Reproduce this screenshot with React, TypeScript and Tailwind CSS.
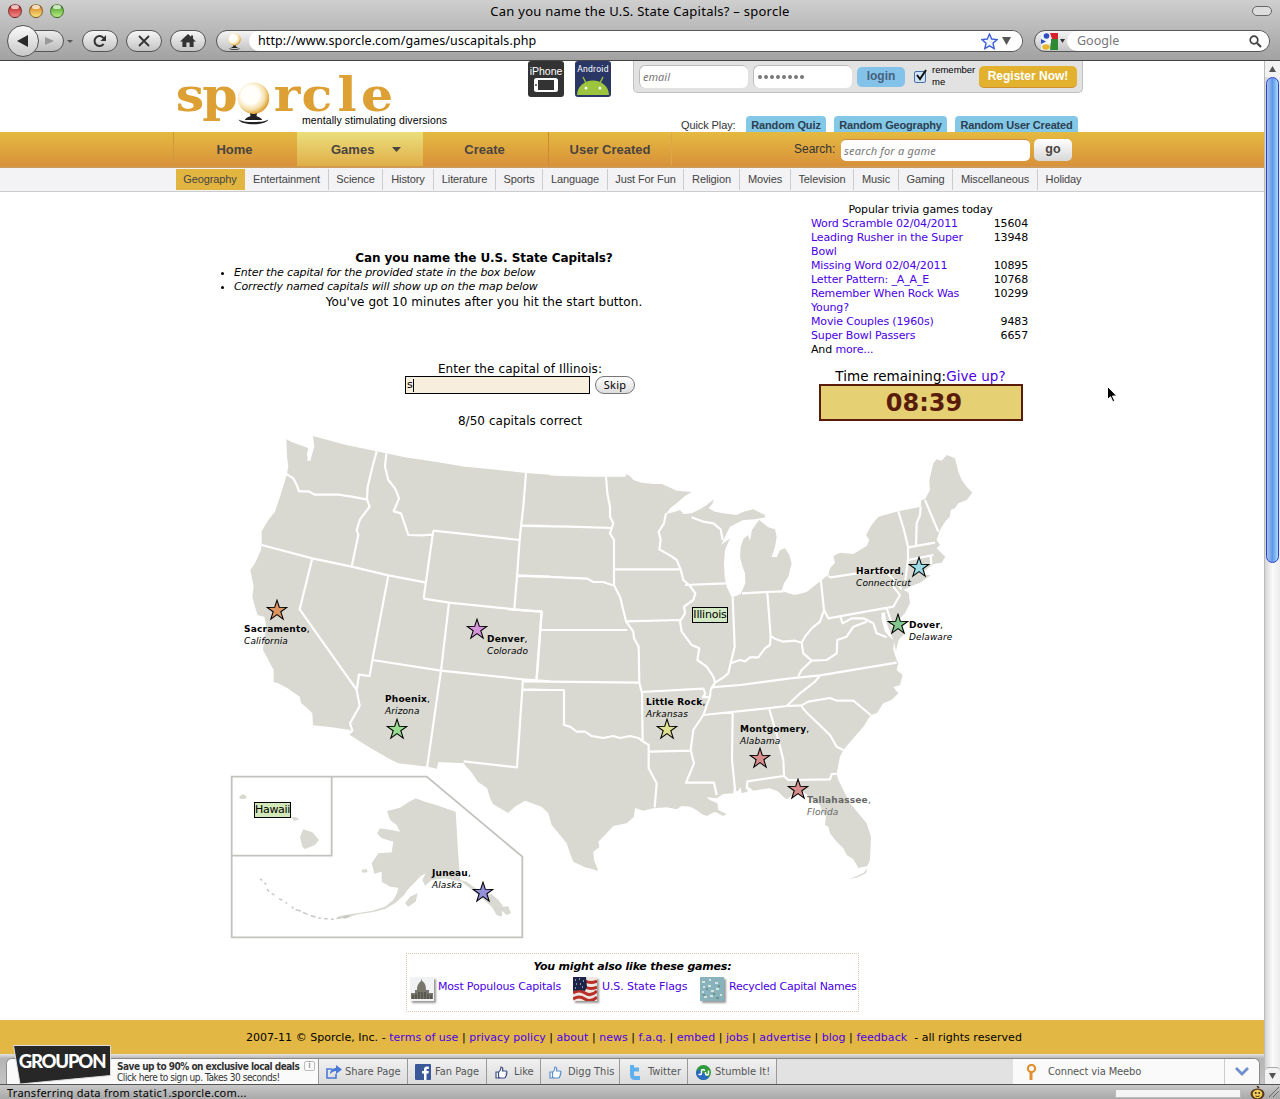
import React from 'react'

const VERDANA = "font-['DejaVu_Sans',Verdana,sans-serif]"
const LUCIDA = "font-['Noto_Sans','Open_Sans',sans-serif]"
const ARIAL = "font-['Liberation_Sans',Arial,sans-serif]"
const TAHOMA = "font-['DejaVu_Sans_Condensed','Noto_Sans',sans-serif]"

const pill = 'h-[22px] w-[36px] rounded-full border border-[#555] bg-gradient-to-b from-[#f6f6f6] to-[#c4c4c4] flex items-center justify-center shrink-0'

function Light({ c }: { c: string }) {
  return (
    <div className={`w-[14px] h-[14px] rounded-full border border-black/40 ${c} flex justify-center`}>
      <div className="w-[8px] h-[4px] rounded-full bg-white/70" />
    </div>
  )
}

function Globe({ className }: { className: string }) {
  return (
    <svg viewBox="0 0 34 44" className={className}>
      <defs>
        <radialGradient id="globe" cx="0.4" cy="0.4" r="0.62">
          <stop offset="0.45" stopColor="#fffefa" />
          <stop offset="0.75" stopColor="#f5dfa8" />
          <stop offset="1" stopColor="#dd9d33" />
        </radialGradient>
      </defs>
      <path d="M1.500 38.500C4 45 30 45 32.500 38.500C28 42 6 42 1.500 38.500Z" fill="#222" />
      <path d="M13 31h8l-1 4c2 1 5 2 6 4H8c1-2 4-3 6-4z" fill="#222" />
      <circle cx="17" cy="16.500" r="16.200" fill="url(#globe)" />
    </svg>
  )
}

function Chrome() {
  return (
    <header className={`h-[61px] shrink-0 border-b border-[#444] bg-gradient-to-b from-[#cfcfcf] to-[#a2a2a2] flex flex-col ${LUCIDA}`}>
      <div className="h-[22px] flex items-center relative">
        <div className="flex gap-[7px] pl-[8px]">
          <Light c="bg-gradient-to-b from-[#b0101c] to-[#f48a8a]" />
          <Light c="bg-gradient-to-b from-[#d07818] to-[#f6e47a]" />
          <Light c="bg-gradient-to-b from-[#3f9c22] to-[#b8ec82]" />
        </div>
        <div className="absolute left-0 w-full text-center text-[13px] leading-[21px] tracking-[0.260px] text-black">Can you name the U.S. State Capitals? – sporcle</div>
        <div className="ml-auto mr-[8px] w-[20px] h-[10px] rounded-full border border-[#666] bg-[#ddd]" />
      </div>
      <div className="h-[38px] flex items-center">
        <div className="relative z-10 ml-[7px] w-[32px] h-[32px] rounded-full border border-[#555] bg-gradient-to-b from-[#fafafa] to-[#c8c8c8] flex items-center justify-center shrink-0">
          <svg width="12" height="12" viewBox="0 0 12 12"><path d="M11 0v12L0 6z" fill="#2a2a2a" /></svg>
        </div>
        <div className="-ml-[8px] w-[33px] h-[22px] rounded-r-full border border-[#555] bg-gradient-to-b from-[#ececec] to-[#bdbdbd] flex items-center justify-center pl-[4px] shrink-0">
          <svg width="9" height="8" viewBox="0 0 9 8"><path d="M0 0v8l9-4z" fill="#999" /></svg>
        </div>
        <svg width="6" height="3" viewBox="0 0 6 3" className="ml-[3px] mr-[9px] shrink-0"><path d="M0 0h6L3 3z" fill="#555" /></svg>
        <div className={pill}>
          <svg width="14" height="14" viewBox="0 0 14 14"><path d="M10.600 10A5 5 0 1 1 10.500 4" fill="none" stroke="#333" strokeWidth="2" /><path d="M13 1v6H7.500z" fill="#333" /></svg>
        </div>
        <div className={`${pill} ml-[8px]`}>
          <svg width="12" height="12" viewBox="0 0 12 12"><path d="M1 1l10 10M11 1L1 11" stroke="#333" strokeWidth="1.800" /></svg>
        </div>
        <div className={`${pill} ml-[8px]`}>
          <svg width="16" height="14" viewBox="0 0 16 14"><path d="M8 0L0 7.500h2.400V13h4V8.500h3.200V13h4V7.500H16L13 4.800V1.500h-2v1.300z" fill="#333" /></svg>
        </div>
        <div className="ml-[10px] w-[807px] h-[22px] rounded-full border border-[#555] bg-gradient-to-b from-[#f4f4f4] to-[#c4c4c4] flex items-center shrink-0">
          <Globe className="ml-[9px] w-[17px] h-[17px] shrink-0" />
          <div className="ml-[6px] h-[20px] flex-1 rounded-full bg-white flex items-center pl-[9px] text-[12.5px] text-black">
            <span className="tracking-[0.100px]">http://www.sporcle.com/games/uscapitals.php</span>
            <svg width="17" height="17" viewBox="0 0 17 17" className="ml-auto"><path d="M8.500 1l2.200 5 5.300.6-4 3.600 1.200 5.400-4.700-2.800-4.700 2.800L5 10.200 1 6.600l5.300-.6z" fill="#eef4ff" stroke="#4060d8" strokeWidth="1.400" /></svg>
            <svg width="9" height="8" viewBox="0 0 9 8" className="ml-[4px] mr-[11px]"><path d="M0 0h9L4.500 8z" fill="#555" /></svg>
          </div>
        </div>
        <div className="ml-[11px] w-[236px] h-[22px] rounded-full border border-[#555] bg-gradient-to-b from-[#f4f4f4] to-[#c4c4c4] flex items-center shrink-0">
          <svg width="17" height="17" viewBox="0 0 17 17" className="ml-[6px] shrink-0">
            <rect width="17" height="17" rx="1" fill="#eef3fb" />
            <path d="M9 0h8v6h-6z" fill="#d8202c" /><path d="M10 6h7v11H9z" fill="#2b8a33" />
            <circle cx="5.500" cy="3" r="2.800" fill="#2f4fc0" /><path d="M0 6l5 2.500L0 11z" fill="#2f4fc0" />
            <ellipse cx="5" cy="14" rx="3.800" ry="2.800" fill="#e8b62c" /><path d="M6.500 7.500h3.500v2.500H6.500z" fill="#fff" />
          </svg>
          <svg width="5" height="4" viewBox="0 0 5 4" className="ml-[2px] shrink-0"><path d="M0 0h5L2.500 4z" fill="#333" /></svg>
          <div className="ml-[2px] h-[20px] flex-1 rounded-full bg-white flex items-center pl-[10px] pr-[7px] text-[12.500px] text-[#777]">
            <span>Google</span>
            <svg width="13" height="13" viewBox="0 0 13 13" className="ml-auto"><circle cx="5" cy="5" r="3.800" fill="none" stroke="#444" strokeWidth="1.700" /><path d="M8 8l4 4" stroke="#444" strokeWidth="2.200" /></svg>
          </div>
        </div>
      </div>
    </header>
  )
}

function Letter({ c }: { c: string }) {
  return <span className="w-[30px] flex justify-center scale-x-110">{c}</span>
}

function SiteHeader() {
  return (
    <div className={`h-[71px] flex shrink-0 ${ARIAL}`}>
      <div className="ml-[175px] w-[353px]">
        <div className="flex h-[53px] pt-[15px] font-['DejaVu_Serif',serif] font-bold text-[46px] leading-[38px] text-[#dca034]">
          <Letter c="s" />
          <Letter c="p" />
          <Globe className="mx-[2px] mt-[6px] w-[33px] h-[43px] shrink-0" />
          <Letter c="r" />
          <Letter c="c" />
          <Letter c="l" />
          <Letter c="e" />
        </div>
        <div className="ml-[127px] whitespace-nowrap text-[10.500px] leading-[13px] tracking-[0.090px] text-black">mentally stimulating diversions</div>
      </div>
      <div className="w-[36px] h-[36px] rounded-[3px] bg-[#333] text-white text-[10.500px] leading-[13px] text-center flex flex-col items-center pt-[4px]">
        iPhone
        <svg width="24" height="14" viewBox="0 0 24 14"><rect width="24" height="14" rx="2.500" fill="#fff" /><rect x="4" y="2" width="16" height="10" fill="#333" /><circle cx="2" cy="7" r="0.900" fill="#333" /></svg>
      </div>
      <div className="ml-[11px] w-[36px] h-[36px] rounded-[3px] bg-[#2a3766] text-white overflow-hidden flex flex-col items-center pt-[2px]">
        <span className="font-['Roboto',sans-serif] text-[8.500px] leading-[13px] tracking-[0.300px]">Android</span>
        <svg width="34" height="20" viewBox="0 0 34 20"><path d="M1 19A16 14.500 0 0 1 33 19z" fill="#9cc43c" /><path d="M10 7L7 1M24 7l3-6" stroke="#9cc43c" strokeWidth="1.400" /><circle cx="10" cy="12" r="1.500" fill="#fff" /><circle cx="24" cy="12" r="1.500" fill="#fff" /></svg>
      </div>
      <div className="ml-[22px] w-[450px]">
        <div className="h-[32px] rounded-b-[5px] border border-t-0 border-[#c0c0c0] bg-[#e3e2e3] flex items-center">
          <div className={`ml-[5px] w-[109px] h-[23px] rounded-[6px] border-t border-l border-[#bbb] bg-white pl-[3px] italic text-[11px] leading-[22px] text-[#777] ${LUCIDA}`}>email</div>
          <div className="ml-[5px] w-[99px] h-[23px] rounded-[6px] border-t border-l border-[#bbb] bg-white pl-[4px] flex items-center gap-[2px]">
            {[0, 1, 2, 3, 4, 5, 6, 7].map((i) => <span key={i} className="w-[4px] h-[4px] rounded-full bg-[#777]" />)}
          </div>
          <div className="ml-[5px] w-[48px] h-[20px] rounded-[5px] bg-[#83c3ea] text-center font-bold text-[12px] leading-[19px] text-[#47607a]">login</div>
          <div className="ml-[9px] w-[12px] h-[12px] rounded-[2px] border border-[#4a6ea8] bg-[#cfe4fa]">
            <svg width="13" height="13" viewBox="0 0 13 13" className="-mt-[3px]"><path d="M2 6l3 4 6-9" fill="none" stroke="#111" strokeWidth="2" /></svg>
          </div>
          <div className="ml-[6px] mb-[1px] w-[47px] text-[9.500px] leading-[12px] text-black">remember me</div>
          <div className="w-[98px] h-[22px] rounded-[5px] bg-[#e2b22f] border-b border-[#cf8f30] text-center font-bold text-[12px] leading-[21px] text-white">Register Now!</div>
        </div>
        <div className="mt-[23px] h-[16px] ml-[48px] flex items-stretch text-[11px] leading-[18px] whitespace-nowrap">
          <span className="w-[65px] text-[#333] tracking-[-0.100px]">Quick Play:</span>
          <span className="w-[80px] text-center rounded-t-[4px] bg-[#84c8e8] font-bold text-[#2c4050] tracking-[-0.120px]">Random Quiz</span>
          <span className="ml-[8px] w-[113px] text-center rounded-t-[4px] bg-[#84c8e8] font-bold text-[#2c4050] tracking-[-0.160px]">Random Geography</span>
          <span className="ml-[8px] w-[123px] text-center rounded-t-[4px] bg-[#84c8e8] font-bold text-[#2c4050] tracking-[-0.180px]">Random User Created</span>
        </div>
      </div>
    </div>
  )
}

const categories = [
  ['Geography', 'w-[69px] bg-[#e2b440] border-transparent'],
  ['Entertainment', 'w-[84px] border-[#ccc]'],
  ['Science', 'w-[54px] border-[#ccc]'],
  ['History', 'w-[51px] border-[#ccc]'],
  ['Literature', 'w-[62px] border-[#ccc]'],
  ['Sports', 'w-[47px] border-[#ccc]'],
  ['Language', 'w-[65px] border-[#ccc]'],
  ['Just For Fun', 'w-[76px] border-[#ccc]'],
  ['Religion', 'w-[56px] border-[#ccc]'],
  ['Movies', 'w-[51px] border-[#ccc]'],
  ['Television', 'w-[63px] border-[#ccc]'],
  ['Music', 'w-[45px] border-[#ccc]'],
  ['Gaming', 'w-[54px] border-[#ccc]'],
  ['Miscellaneous', 'w-[85px] border-[#ccc]'],
  ['Holiday', 'w-[52px] border-transparent'],
]

function Nav() {
  return (
    <nav className={ARIAL}>
      <div className="h-[36px] border-b-[2px] border-b-[#cf9a55] bg-gradient-to-b from-[#e4ba40] to-[#d8913a] flex text-[13px] font-bold leading-[35px] text-[#4a4440]">
        <div className="ml-[173px] w-[124px] border-l border-[#cf9838] text-center pr-[2px]">Home</div>
        <div className="w-[126px] bg-gradient-to-b from-[#eadf7c] to-[#e0ae48] flex items-center pl-[34px]">
          Games
          <svg width="9" height="5" viewBox="0 0 9 5" className="ml-[18px]"><path d="M0 0h9L4.500 5z" fill="#4a4440" /></svg>
        </div>
        <div className="w-[126px] border-r border-[#cf8838] text-center pr-[2px]">Create</div>
        <div className="w-[123px] border-r border-[#dda845] text-center">User Created</div>
        <div className="ml-[122px] w-[47px] font-normal text-[12px] text-[#333] whitespace-nowrap">Search:</div>
        <div className={`mt-[7px] w-[189px] h-[22px] rounded-[5px] bg-white border-t border-[#d08838] pl-[3px] font-normal italic text-[11px] leading-[21px] tracking-[0.200px] text-[#777] ${LUCIDA}`}>search for a game</div>
        <div className="mt-[7px] ml-[4px] w-[38px] h-[22px] rounded-[5px] bg-gradient-to-b from-white to-[#d8d8d8] text-center leading-[20px] text-[12.500px]">go</div>
      </div>
      <div className="h-[24px] border-b border-[#ccc] bg-[#f3f2f4] pl-[176px] pt-[1px] flex text-[11px] leading-[21px] text-[#444] tracking-[-0.120px]">
        {categories.map(([name, cls]) => (
          <div key={name} className={`h-[21px] text-center border-r whitespace-nowrap ${cls}`}>{name}</div>
        ))}
      </div>
    </nav>
  )
}

const popular = [
  ['Word Scramble 02/04/2011', '15604'],
  ['Leading Rusher in the Super Bowl', '13948'],
  ['Missing Word 02/04/2011', '10895'],
  ['Letter Pattern: _A_A_E', '10768'],
  ['Remember When Rock Was Young?', '10299'],
  ['Movie Couples (1960s)', '9483'],
  ['Super Bowl Passers', '6657'],
]

const mainland = [
  {
    t: 'translate(225 430) scale(0.33333)',
    fill: 'M184 28L200 36 222 44 240 50 250 55 246 70 248 88 238 102 224 100 240 92 256 92 262 70 268 50 264 18 300 28 360 44 455 64 540 82 640 97 720 110 800 118 903 129 975 134 975 1050 758 1050 745 1030 725 1012 716 1000 640 996 636 1016 608 1010 520 1000 495 988 430 950 370 912 376 900 320 892 264 886 262 850 250 838 228 818 224 800 190 776 160 760 146 756 146 720 130 690 114 660 118 620 124 590 118 560 98 556 90 530 82 500 86 470 80 440 76 420 90 400 108 360 110 345 110 304 130 270 150 245 165 200 185 135 190 110 186 80Z',
    lines: 'M184 132L205 145 215 165 222 184 250 184 270 194 340 194 380 200 424 208M455 64L440 120 428 170 426 208 434 230 405 268 395 300 400 315 380 410M484 70L480 110 490 150 510 175 522 205 506 244 528 250 540 285 550 315 590 316 620 314M110 345L262 385 380 410 490 436 604 458M625 302L612 390 596 506M625 302L884 330M596 506L672 518 868 538 950 545M903 129L895 230 888 290 884 330 876 440 868 538M888 286L975 288M876 438L975 440M262 385L224 538 395 780M490 436L442 690 434 738 402 734 395 780 404 828 375 880 382 902 370 912M672 518L648 722 606 1014M442 690L648 722 894 748 975 754M894 748L876 1012 716 994M950 545L934 752M948 600L975 600M894 778L975 780',
  },
  {
    t: 'translate(510 460) scale(0.33333)',
    fill: 'M-60 30L0 36 48 42 150 48 250 50 346 50 350 42 362 50 370 60 395 68 430 72 455 72 475 80 500 92 545 96 525 108 500 130 480 145 468 162 495 155 510 150 520 162 545 160 570 148 590 135 612 118 608 130 596 145 615 155 640 160 680 165 700 155 730 148 745 155 765 165 765 172 735 178 700 180 680 190 660 200 650 220 634 254 660 235 645 270 642 310 644 350 650 380 665 412 670 1000 640 1002 620 1015 588 1012 600 1020 622 1030 625 1050 650 1062 640 1068 615 1055 590 1068 575 1062 560 1050 540 1040 515 1038 500 1048 470 1042 430 1045 400 1052 375 1044 372 1070 350 1090 310 1098 285 1125 265 1145 268 1162 250 1175 252 1200 265 1232 225 1222 190 1205 180 1180 170 1150 150 1125 125 1095 115 1060 95 1040 45 1022 15 1040 -6 1059 -51 1032 -60 1014 -69 984 -96 966 -114 939 -132 915 -132 850Z',
    lines: 'M38 198L180 200 308 204M24 346L232 356 250 366 280 366 308 376M288 50L292 100 300 140 300 170 310 190 300 220 312 240 312 376 330 410 340 450 348 484 370 515 372 535 386 560 388 668 396 700 398 840M312 328L508 328M468 160L462 190 446 215 452 240 448 268 480 286 500 300 512 328 520 360 540 378 556 400 550 420 522 440 525 460 510 484 515 515 545 555 568 565 562 600 590 620 610 650 615 668 602 690 600 710 580 765 550 810 542 870 552 910 528 968 612 968 620 1005M348 484L510 480M525 375L648 370M545 172L580 185 610 190 632 208 638 240M92 510L352 510M-5 448L95 455 80 662M42 664L388 668M40 690L162 690 162 795 180 800 200 815 225 815 245 828 280 834 310 828 330 834 360 828 385 834 400 845 416 855 416 925 440 970 434 1042M392 696L580 686 586 700 578 712 600 710M418 875L542 872',
  },
  {
    t: 'translate(720 440) scale(0.33333)',
    fill: 'M0 1064L0 470 38 472 62 462 76 430 75 400 66 375 60 350 62 320 70 298 84 285 90 302 96 270 110 250 118 240 145 262 165 268 170 290 165 320 155 350 170 352 180 330 195 325 208 345 215 370 205 410 192 430 185 452 205 460 225 465 260 456 290 432 325 405 330 385 345 368 340 348 360 338 400 342 440 318 448 300 438 285 455 255 475 230 535 214 602 200 604 180 615 178 630 150 628 120 640 70 650 58 665 62 680 45 705 55 715 95 725 120 740 140 757 158 740 180 715 190 705 205 692 210 690 230 675 245 660 270 650 300 660 315 650 325 665 340 676 350 665 368 640 372 620 388 606 404 632 406 600 428 570 440 550 450 566 458 570 490 555 520 540 535 545 560 555 580 536 600 528 632 522 606 512 580 500 550 494 516 484 520 485 540 495 575 510 592 522 602 520 630 528 655 535 670 530 690 548 705 540 735 520 742 535 760 515 780 490 790 470 820 452 825 430 860 400 895 370 930 360 950 350 1000 355 1020 370 1050 390 1090 415 1120 440 1150 453 1190 450 1260 442 1278 415 1284 400 1258 380 1245 370 1225 350 1205 330 1180 325 1160 315 1155 318 1130 305 1110 300 1095 280 1080 262 1065 240 1050 225 1060 200 1078 190 1070 175 1055 150 1045 125 1048 100 1052 85 1040 82 1055 65 1060 62 1042 52 1055 44 1048 20 1058ZM386 1318L410 1308 432 1298 442 1284 438 1300 412 1312Z',
    lines: 'M38 472L44 620 32 670 25 700 10 712 -15 728M-28 742L60 735 210 715 300 706 530 668M-50 825L140 805 200 798 245 796 265 785 330 774 350 782 400 782 452 825M38 815L36 960 46 1058M148 808L175 900 190 960 192 1008M80 1048L82 1024 192 1008 205 1020 330 1018 335 1002 350 1002M245 800L262 820 330 885 350 920 370 930M300 706L285 725 240 760 200 798M32 670L60 660 75 664 90 652 115 652 135 625 150 615 152 588M142 458L152 588 165 596 190 605 225 602 245 608 255 590 275 565 300 545 312 510 302 415M66 460L140 456 190 454M245 608L250 640 275 662 320 660 350 640 352 600 380 590 400 560 440 545M275 662L245 690 235 708M312 510L325 535 520 500 540 465 520 440 520 420M325 408L332 412 490 388 520 418 545 448M362 532L368 550 395 535 430 535 460 550 470 580 500 592M500 504L518 560M535 214L552 270 564 320 564 360 556 420M602 200L600 225 590 250 588 320M615 180L640 240 655 275M564 322L645 308M564 360L640 345M632 345L634 372',
  },
]

function UsaMap() {
  return (
    <svg viewBox="225 430 755 515" width="755" height="515" className="block">
      {mainland.map((p) => <path key={p.t} d={p.fill} transform={p.t} fill="#d9d9d2" />)}
      {mainland.map((p) => <path key={p.t} d={p.lines} transform={p.t} fill="none" stroke="#fff" strokeWidth="6.500" strokeLinejoin="round" />)}
      <g transform="translate(225 765) scale(0.33333)">
        <path d="M20 35H605L892 275V517H20ZM320 35V272H20" fill="none" stroke="#c2c2be" strokeWidth="5.500" />
        <path d="M486 138L525 128 550 112 572 100 600 110 640 122 692 140 698 240 702 300 706 345 725 350 745 365 780 388 800 388 820 405 835 425 850 424 858 445 845 450 832 438 830 455 815 450 800 425 760 390 735 370 710 350 660 340 620 345 600 362 592 345 602 325 585 335 570 352 550 372 535 392 510 415 480 432 445 441 400 448 370 457 335 463 345 453 375 448 440 438 480 425 505 405 516 385 520 368 495 365 470 350 470 320 448 326 440 295 460 265 500 262 505 230 470 220 456 205 465 190 500 195 525 200 515 180 495 165Z" fill="#d9d9d2" />
        <path d="M540 415L555 395 578 385 572 410 550 425ZM408 315L425 312 428 322 414 323ZM42 95L54 87 66 95 60 102 45 101ZM198 155L213 157 223 163 209 168ZM225 215L235 193 262 202 282 225 270 240 240 252 232 245Z" fill="#d9d9d2" />
        <path d="M105 342L112 346M118 354L124 358M126 372L132 380M140 386L148 390M162 402L172 405M182 412L186 416M200 426L206 430M212 434L228 438M234 442L248 448M258 452L272 456M280 459L288 460M298 461L308 461M318 463L326 463" fill="none" stroke="#c8c8c4" strokeWidth="4.500" />
        <path d="M332 462L342 454 348 460ZM350 458L358 452 372 450 374 456 360 461Z" fill="#c8c8c4" />
      </g>
    </svg>
  )
}

type Pin = { city: string; state: string; star: string; label: string; fill: string }

const pins: Pin[] = [
  { city: 'Sacramento', state: 'California', star: 'left-[41px] top-[169px]', label: 'left-[19px] top-[193px] text-black', fill: '#dc9560' },
  { city: 'Denver', state: 'Colorado', star: 'left-[241px] top-[188px]', label: 'left-[262px] top-[203px] text-black', fill: '#d793dc' },
  { city: 'Phoenix', state: 'Arizona', star: 'left-[161px] top-[288px]', label: 'left-[160px] top-[263px] text-black', fill: '#98dc90' },
  { city: 'Little Rock', state: 'Arkansas', star: 'left-[431px] top-[288px]', label: 'left-[421px] top-[266px] text-black', fill: '#dfe090' },
  { city: 'Montgomery', state: 'Alabama', star: 'left-[524px] top-[317px]', label: 'left-[515px] top-[293px] text-black', fill: '#d98c8c' },
  { city: 'Tallahassee', state: 'Florida', star: 'left-[562px] top-[348px]', label: 'left-[582px] top-[364px] text-[#666]', fill: '#d98c8c' },
  { city: 'Juneau', state: 'Alaska', star: 'left-[247px] top-[451px]', label: 'left-[207px] top-[437px] text-black', fill: '#9490dc' },
  { city: 'Hartford', state: 'Connecticut', star: 'left-[683px] top-[126px]', label: 'left-[631px] top-[135px] text-black', fill: '#9adbe6' },
  { city: 'Dover', state: 'Delaware', star: 'left-[662px] top-[183px]', label: 'left-[684px] top-[189px] text-black', fill: '#84c890' },
]

function MapPin({ pin }: { pin: Pin }) {
  return (
    <>
      <svg viewBox="-11 -11 22 22" className={`absolute w-[22px] h-[22px] ${pin.star}`}>
        <path d="M0-9.800L2.300-2.800 9.900-2.600 3.800 1.700 6.200 9.200 0 4.700-6.200 9.200-3.800 1.700-9.900-2.600-2.300-2.800Z" fill={pin.fill} stroke="#000" strokeWidth="1.050" />
      </svg>
      <div className={`absolute whitespace-nowrap text-[9px] leading-[12px] tracking-[0.200px] ${pin.label}`}>
        <div><b>{pin.city}</b>,</div>
        <div className="italic tracking-[0.100px]">{pin.state}</div>
      </div>
    </>
  )
}

const link = 'text-[#4a00e8]'

function Content() {
  return (
    <main className={`h-[828px] shrink-0 flex flex-col text-black ${VERDANA}`}>
      <div className="h-[238px] flex">
        <div className="ml-[176px] w-[616px] pt-[59px]">
          <h1 className="text-center font-bold text-[12px] leading-[15px] tracking-[-0.080px]">Can you name the U.S. State Capitals?</h1>
          <ul className="list-disc pl-[58px] italic text-[11px] leading-[14px] tracking-[-0.150px]">
            <li>Enter the capital for the provided state in the box below</li>
            <li>Correctly named capitals will show up on the map below</li>
          </ul>
          <p className="text-center text-[12px] leading-[16px] tracking-[0.060px]">You've got 10 minutes after you hit the start button.</p>
          <div className="pl-[72px] pt-[52px] flex flex-col items-center text-[12px]">
            <div className="h-[14px] leading-[15px] tracking-[0.100px]">Enter the capital of Illinois:</div>
            <div className="flex gap-[5px]">
              <div className="w-[185px] h-[18px] border border-black bg-[#f7eedd] pl-[1px] flex items-center text-[11px]">
                s<span className="w-px h-[13px] bg-black" />
              </div>
              <div className={`w-[40px] h-[18px] rounded-full border border-[#777] bg-gradient-to-b from-white to-[#ddd] text-center text-[11px] leading-[16px] tracking-[0.200px] ${LUCIDA}`}>Skip</div>
            </div>
            <div className="mt-[20px] leading-[15px] tracking-[0.050px]">8/50 capitals correct</div>
          </div>
        </div>
        <div className="ml-[19px] w-[217px] pt-[11px] text-[11px] leading-[14px] tracking-[-0.150px]">
          <div className="text-center pl-[2px]">Popular trivia games today</div>
          {popular.map(([name, n]) => (
            <div key={name} className="flex justify-between">
              <a className={`w-[165px] ${link}`}>{name}</a>
              <span>{n}</span>
            </div>
          ))}
          <div>And <a className={link}>more...</a></div>
          <div className="mt-[12px] h-[15px] text-center text-[13.500px] leading-[15px] tracking-[0.050px] pl-[2px] whitespace-nowrap">Time remaining:<a className={link}>Give up?</a></div>
          <div className="ml-[8px] w-[204px] h-[37px] border-2 border-[#5a1c0a] bg-[#e6d074] pl-[6px] text-center font-bold text-[24px] leading-[34px] tracking-normal text-[#5a1c0a]">08:39</div>
        </div>
      </div>
      <div className="relative ml-[225px] w-[755px] h-[515px]">
        <UsaMap />
        {pins.map((p) => <MapPin key={p.city} pin={p} />)}
        <div className="absolute left-[467px] top-[177px] w-[36px] h-[16px] border border-black bg-[#d3e8c4] text-center text-[11px] leading-[14px] tracking-[-0.200px]">Illinois</div>
        <div className="absolute left-[29px] top-[372px] w-[37px] h-[16px] border border-black bg-[#d3e8b8] text-center text-[11px] leading-[14px] tracking-[-0.350px]">Hawaii</div>
      </div>
      <div className="mt-[8px] ml-[406px] w-[453px] h-[59px] border border-dotted border-[#dcc8b8]">
        <div className="text-center pt-[5px] font-bold italic text-[11px] leading-[15px] tracking-[-0.200px]">You might also like these games:</div>
        <div className="flex items-start pl-[3px] mt-[3px] text-[11px] leading-[20px] tracking-[-0.180px] whitespace-nowrap">
          <svg width="24" height="24" viewBox="0 0 24 24" className="shadow-[2px_2px_2px_#999]"><rect width="24" height="24" fill="#f0f2f4" /><path d="M1 22v-6h4v-3h2c0-6 3-8 4-9 1-3 1-3 1 0 2 1 4 3 4 9h3v3h4v6z" fill="#77776c" /><path d="M3 18v4M6 17v5M9 15v7M12 15v7M15 15v7M18 17v5M21 18v4" stroke="#3c3c36" /></svg>
          <a className={`ml-[4px] w-[135px] ${link}`}>Most Populous Capitals</a>
          <svg width="24" height="24" viewBox="0 0 24 24" className="shadow-[2px_2px_2px_#999]"><rect width="24" height="24" fill="#f0e6e2" /><path d="M0 16q6-4 12 0t12-2M0 22q6-4 12 0t12-2M12 4q6 3 12 0M12 10q6 3 12 0" stroke="#b83028" strokeWidth="3" fill="none" /><path d="M0 0h13l1 10-2 4-5-1-7 1z" fill="#1c2448" /><path d="M2 3h1M6 2h1M10 4h1M3 7h1M7 7h1M2 11h1M9 10h1" stroke="#fff" strokeWidth="1.200" /></svg>
          <a className={`ml-[5px] w-[98px] tracking-[-0.100px] ${link}`}>U.S. State Flags</a>
          <svg width="24" height="24" viewBox="0 0 24 24" className="shadow-[2px_2px_2px_#999]"><rect width="24" height="24" fill="#88b2bc" /><path d="M2 5h3M9 3h2M15 6h3M3 10h2M8 9h3M16 12h3M2 15h2M11 14h3M4 20h3M10 19h3M20 18h2" stroke="#d4e4dc" strokeWidth="2" /><path d="M6 12h2M13 17h2M18 9h2M3 18h2M16 21h3" stroke="#658878" strokeWidth="1.500" /></svg>
          <a className={`ml-[5px] tracking-[-0.250px] ${link}`}>Recycled Capital Names</a>
        </div>
      </div>
    </main>
  )
}

const footerLinks = ['terms of use', 'privacy policy', 'about', 'news', 'f.a.q.', 'embed', 'jobs', 'advertise', 'blog', 'feedback']

function Footer() {
  return (
    <footer className={`h-[34px] shrink-0 bg-[#e2b744] text-[11px] leading-[35px] tracking-[0.025px] text-black whitespace-pre pl-[246px] ${VERDANA}`}>
      {'2007-11 © Sporcle, Inc. - '}
      {footerLinks.map((l, i) => (
        <React.Fragment key={l}>
          {i > 0 && ' | '}
          <a className={link}>{l}</a>
        </React.Fragment>
      ))}
      {'  - all rights reserved'}
    </footer>
  )
}

function Thumb({ color }: { color: string }) {
  return (
    <svg width="13" height="13" viewBox="0 0 13 13"><path d="M1 6h2.500v6H1zM3.500 6.500C5.500 5 6 3 6 1c2 0 2 2 1.500 4H11c1.200 0 1.200 1.500.5 2 .5.500.3 1.500-.3 1.800.3.600 0 1.300-.5 1.500 0 1-.5 1.700-1.500 1.700H5.500l-2-.8" fill="#fff" stroke={color} strokeWidth="1.200" /></svg>
  )
}

const seg = 'border-r border-[#999] flex items-center leading-[26px] pt-[1px] bg-gradient-to-b from-[#f0f0f0] to-[#dcdcdc]'

function MeeboBar() {
  return (
    <div className={`relative h-[30px] shrink-0 bg-gradient-to-b from-[#e4e4e4] via-[#b4b4b4] via-15% to-[#c4c4c4] pt-[4px] pl-[6px] pr-[4px] text-[11px] text-[#555] whitespace-nowrap ${TAHOMA}`}>
      <div className="h-[26px] rounded-t-[6px] border border-b-0 border-[#888] bg-[#e2e2e2] flex overflow-hidden">
        <div className="w-[312px] bg-[#fafafa] border-r border-[#999] pl-[110px] pt-[2px] flex">
          <div className="w-[187px] text-[10px] leading-[11px] text-[#333]">
            <div className="font-bold tracking-[-0.500px]">Save up to 90% on exclusive local deals</div>
            <div className="tracking-[-0.430px]">Click here to sign up. Takes 30 seconds!</div>
          </div>
          <div className="w-[11px] h-[10px] border border-[#bbb] rounded-[2px] text-center text-[8px] leading-[8px]">i</div>
        </div>
        <div className={`${seg} w-[89px] pl-[7px] gap-[3px]`}>
          <svg width="16" height="14" viewBox="0 0 16 14"><path d="M6 4H1v9h9V9" fill="none" stroke="#4a7ad8" strokeWidth="1.600" /><path d="M4 9c0-4 3-6 6-6V0l6 4.500L10 9V6C8 6 6 7 4 9z" fill="#4a7ad8" /></svg>
          Share Page
        </div>
        <div className={`${seg} w-[79px] pl-[7px] gap-[4px]`}>
          <svg width="16" height="16" viewBox="0 0 16 16"><rect width="16" height="16" rx="1" fill="#3b5998" /><path d="M9 16V9.500h-2V7h2V5.500C9 3.500 10 2.500 12 2.500h1.800V5H12.500c-.8 0-1 .3-1 1v1h2.300l-.3 2.500h-2V16z" fill="#fff" /></svg>
          Fan Page
        </div>
        <div className={`${seg} w-[54px] pl-[8px] gap-[6px]`}><Thumb color="#3b4f88" />Like</div>
        <div className={`${seg} w-[79px] pl-[8px] gap-[6px]`}><Thumb color="#5b8fd0" />Digg This</div>
        <div className={`${seg} w-[68px] pl-[9px] gap-[8px]`}>
          <svg width="11" height="16" viewBox="0 0 11 16"><path d="M3 1v10c0 2 1 3 3 3h5M3 5.500h7" fill="none" stroke="#5fb0ee" strokeWidth="4" /></svg>
          Twitter
        </div>
        <div className={`${seg} w-[89px] pl-[8px] gap-[4px]`}>
          <svg width="15" height="15" viewBox="0 0 15 15"><circle cx="7.500" cy="7.500" r="7.500" fill="#2f9a3c" /><path d="M0 7.500a7.500 7.500 0 0 0 13 5L2 4z" fill="#2a6ac0" /><path d="M2.500 9.500h2c1 0 1-1 1-2V6c0-2 3-2 3 0M12.500 5.500v3c0 2-3 2-3 0V7" fill="none" stroke="#fff" strokeWidth="1.500" /></svg>
          Stumble It!
        </div>
        <div className="flex-1" />
        <div className="w-[212px] bg-[#fafafa] flex items-center leading-[26px] pt-[1px] pl-[13px] gap-[11px] tracking-[-0.100px] border-r border-[#ccc]">
          <svg width="11" height="16" viewBox="0 0 11 16"><circle cx="5.500" cy="4.500" r="3.600" fill="none" stroke="#e09030" strokeWidth="2.200" /><path d="M5 8v8" stroke="#e09030" strokeWidth="3" /></svg>
          Connect via Meebo
        </div>
        <div className="w-[34px] bg-[#fafafa] flex items-center justify-center">
          <svg width="14" height="9" viewBox="0 0 14 9"><path d="M1 1l6 6 6-6" fill="none" stroke="#6f8fd0" strokeWidth="2.800" /></svg>
        </div>
      </div>
      <div className="absolute left-[13px] top-[-9px] w-[98px] h-[39px]">
        <svg viewBox="0 0 98 39" className="absolute w-[98px] h-[39px]"><path d="M0.500 0.500H97.500V30.500L7 39z" fill="#272727" stroke="#ddd" /></svg>
        <div className="relative pt-[5px] text-center font-['Lato',sans-serif] font-black text-[18.500px] leading-[23px] tracking-[-1.200px] text-white">GROUPON</div>
      </div>
    </div>
  )
}

function Scrollbar() {
  return (
    <div className="w-[16px] shrink-0 border-l border-[#bbb] bg-gradient-to-r from-[#d5d5d5] via-[#fafafa] to-[#ececec] flex flex-col items-center">
      <div className="h-[16px] w-full bg-[#f2f2f2] flex items-center justify-center"><svg width="7" height="6" viewBox="0 0 7 6"><path d="M0 6h7L3.500 0z" fill="#555" /></svg></div>
      <div className="h-[486px] w-[13px] rounded-full border border-[#2e3fd0] bg-gradient-to-r from-[#a9c4ee] via-[#5f97ea] to-[#a8dcf6]" />
      <div className="flex-1" />
      <div className="h-[17px] w-full border-t border-[#aaa] rounded-t-[4px] bg-[#f2f2f2] flex items-center justify-center"><svg width="7" height="6" viewBox="0 0 7 6"><path d="M0 0h7L3.500 6z" fill="#555" /></svg></div>
    </div>
  )
}

export default function App() {
  return (
    <div className="relative w-[1280px] h-[1099px] overflow-hidden flex flex-col bg-white">
      <Chrome />
      <div className="h-[1023px] flex">
        <div className="w-[1264px] flex flex-col">
          <SiteHeader />
          <Nav />
          <Content />
          <Footer />
          <MeeboBar />
        </div>
        <Scrollbar />
      </div>
      <div className={`h-[15px] border-t border-[#555] bg-gradient-to-b from-[#c8c8c8] to-[#a8a8a8] flex pl-[7px] text-[11px] leading-[16px] text-black ${LUCIDA}`}>
        <span className="tracking-[0.250px]">Transferring data from static1.sporcle.com...</span>
        <div className="ml-auto mt-[4px] w-[126px] h-[9px] bg-[#f4f4f4] border border-[#bbb]" />
        <svg width="15" height="13" viewBox="0 0 15 13" className="ml-[9px] mt-[1px]"><path d="M7 0l2 2" stroke="#3a2410" strokeWidth="1.500" /><ellipse cx="7.500" cy="8" rx="7" ry="5.500" fill="#5a3a18" /><ellipse cx="7.500" cy="8" rx="4.800" ry="4.200" fill="#f4cc58" /><circle cx="5.800" cy="7" r="0.900" fill="#222" /><circle cx="9.200" cy="7" r="0.900" fill="#222" /><path d="M5.500 10q2 1 4 0" stroke="#222" fill="none" /></svg>
        <svg width="12" height="13" viewBox="0 0 12 13" className="ml-[2px] mr-[1px]"><path d="M2 12L12 2M6 12l6-6" stroke="#666" /></svg>
      </div>
      <svg width="13" height="19" viewBox="0 0 13 19" className="absolute left-[1106px] top-[385px]"><path d="M1.500 1.500v13l3-2.800 2.200 5 2-.9-2.200-4.800h4.300z" fill="#000" stroke="#fff" /></svg>
    </div>
  )
}
